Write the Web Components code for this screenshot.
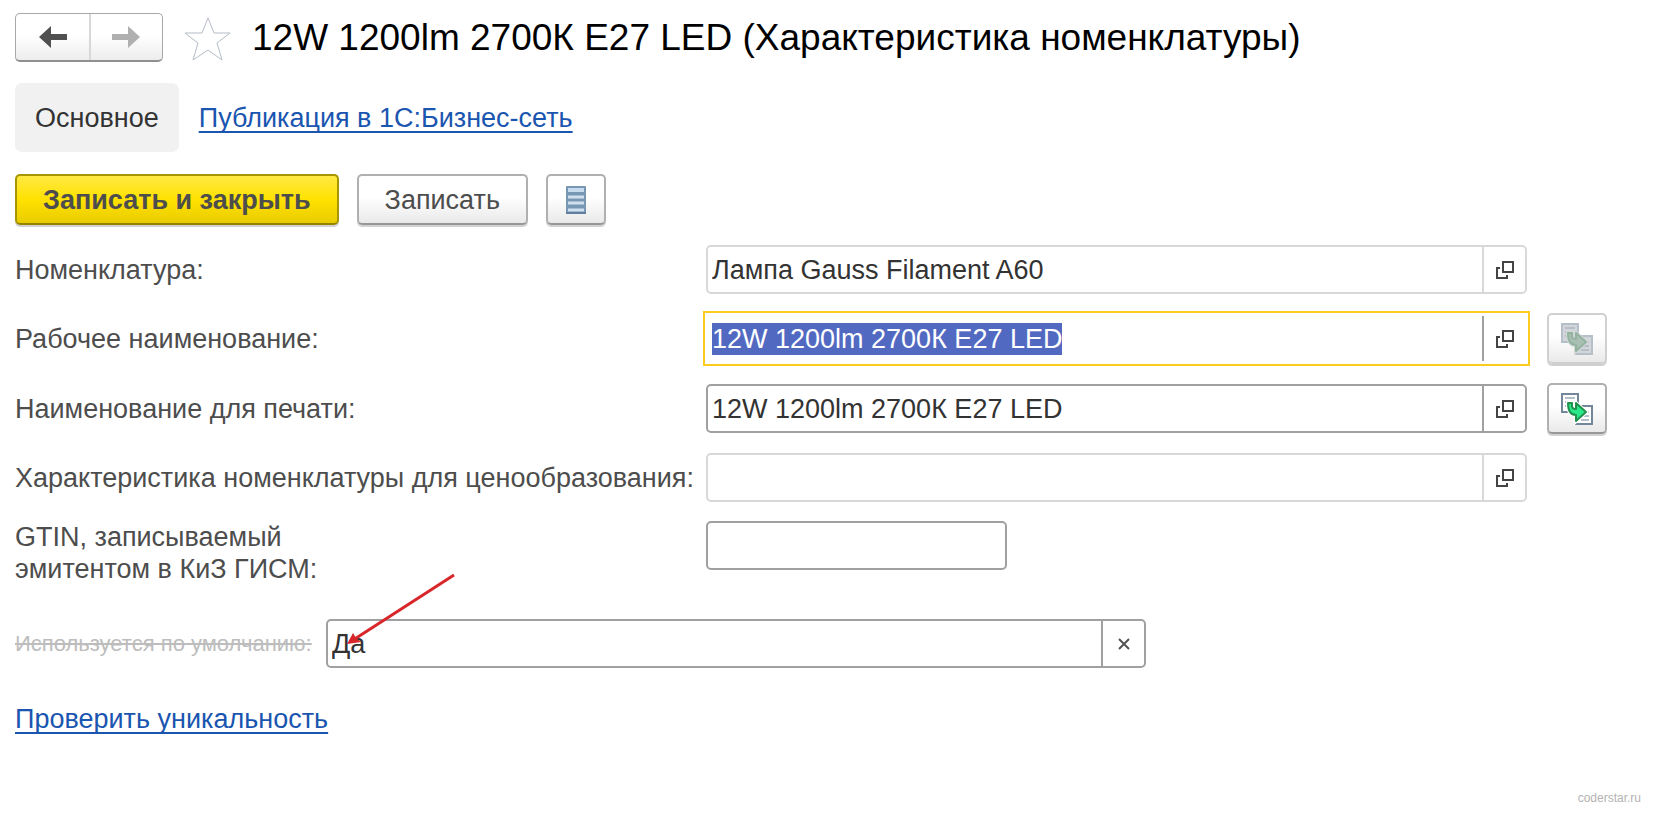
<!DOCTYPE html>
<html lang="ru">
<head>
<meta charset="utf-8">
<title>Характеристика номенклатуры</title>
<style>
    body {
        margin: 0;
        background: #fff;
        color: #4d4d4d;
        font: 27px/32px "Liberation Sans", Arial, sans-serif;
    }
</style>
</head>
<body>
<item-form>
    <form-header slot="header">12W 1200lm 2700К E27 LED (Характеристика номенклатуры)</form-header>

    <form-tab slot="tabs">Основное</form-tab>
    <form-link slot="tabs">Публикация в 1С:Бизнес-сеть</form-link>

    <form-button slot="commands" kind="primary">Записать и закрыть</form-button>
    <form-button slot="commands" kind="text">Записать</form-button>
    <form-button slot="commands" kind="icon" icon="list" label="Список"></form-button>

    <form-field value="Лампа Gauss Filament A60" action="open" muted>Номенклатура:</form-field>
    <form-field value="12W 1200lm 2700К E27 LED" action="open" active>Рабочее наименование:
        <form-button slot="side" kind="icon" icon="copy" label="Заполнить" disabled></form-button>
    </form-field>
    <form-field value="12W 1200lm 2700К E27 LED" action="open">Наименование для печати:
        <form-button slot="side" kind="icon" icon="copy" label="Заполнить"></form-button>
    </form-field>
    <form-field action="open" muted>Характеристика номенклатуры для ценообразования:</form-field>
    <form-field short>GTIN, записываемый<br>эмитентом в КиЗ ГИСМ:</form-field>
    <form-field slot="extra" value="Да" action="clear" unused>Используется по умолчанию:</form-field>

    <form-link slot="extra">Проверить уникальность</form-link>
    <span slot="footer">coderstar.ru</span>
</item-form>

<script>
const icons = {
    back: `<svg width="28" height="22" viewBox="0 0 28 22"><path fill="#505050" d="M0 11 12 0V8H28V14H12V22Z"/></svg>`,
    forward: `<svg width="28" height="22" viewBox="0 0 28 22"><path fill="#b0b0b0" d="M28 11 16 0V8H0V14H16V22Z"/></svg>`,
    star: `<svg width="48" height="46" viewBox="0 0 48 46"><path fill="#fff" stroke="#b5bdc6" d="M24 3 30 18H46L33 28 38 45 24 35 9 45 14 28 1 18H18Z"/></svg>`,
    open: `<svg width="18" height="18" viewBox="0 0 18 18" fill="none" stroke="#444" stroke-width="2"><path d="M7 1H17V11H7ZM4 7H1V17H11V14"/></svg>`,
    clear: `<svg width="12" height="12" viewBox="0 0 12 12" fill="none" stroke="#555" stroke-width="2"><path d="M1 1 11 11M11 1 1 11"/></svg>`,
    list: `<svg width="20" height="28" viewBox="0 0 20 28">
        <rect width="20" height="28" rx="1" fill="#7897b2"/>
        <path stroke="#c6dbed" stroke-width="4" d="M2 4H18"/>
        <path stroke="#cfe0ef" stroke-width="3" d="M2 11H18M2 17H18M2 24H18"/>
        <path stroke="#5f7f9b" stroke-width="2" d="M0 27H20"/>
    </svg>`,
    copy: `<svg width="32" height="32" viewBox="0 0 32 32">
        <path class="page" fill="#fff" stroke="#74869a" stroke-width="2" d="M1 1H17V19H1ZM15 13H31V31H15Z"/>
        <path class="lines" stroke="#b4bfca" stroke-width="2" d="M4 5H14M4 9H14M4 13H12M20 19H28M20 23H28M20 27H28"/>
        <path class="halo" fill="#fff" stroke="#fff" stroke-width="4" d="M7 10H11V13Q11 16 15 16V10L25 19 15 28V22C9 22 7 17 7 10Z"/>
        <path class="arrow" fill="#2be88b" stroke="#23914d" stroke-width="2" stroke-linejoin="round" d="M7 10H11V13Q11 16 15 16V10L25 19 15 28V22C9 22 7 17 7 10Z"/>
    </svg>`
}

class ItemForm extends HTMLElement {
    constructor() {
        super()
        this.attachShadow({ mode: 'open' })
        this.shadowRoot.innerHTML = `
        <style>
            :host {
                display: flex;
                flex-direction: column;
                box-sizing: border-box;
                min-height: 100vh;
                padding: 13px 48px 9px 15px;
            }
            nav {
                display: flex;
                align-items: center;
                gap: 20px;
                margin: 21px 0 22px;
            }
            .commands {
                display: flex;
                gap: 18px;
                margin-bottom: 20px;
            }
            .fields {
                display: flex;
                flex-direction: column;
                gap: 19px;
            }
            .extra {
                display: flex;
                flex-direction: column;
                align-items: flex-start;
                gap: 35px;
                margin-top: 34px;
            }
            footer {
                margin: auto -34px 0 0;
                text-align: right;
                font-size: 12px;
                line-height: 16px;
                color: #b3b3b3;
            }
        </style>
        <slot name="header"></slot>
        <nav><slot name="tabs"></slot></nav>
        <div class="commands"><slot name="commands"></slot></div>
        <div class="fields"><slot></slot></div>
        <div class="extra"><slot name="extra"></slot></div>
        <footer><slot name="footer"></slot></footer>`
    }
}

class FormHeader extends HTMLElement {
    constructor() {
        super()
        this.attachShadow({ mode: 'open' })
        this.shadowRoot.innerHTML = `
        <style>
            :host {
                display: flex;
                align-items: center;
            }
            .history {
                display: grid;
                grid-template-columns: 1fr 1fr;
                box-sizing: border-box;
                width: 148px;
                height: 49px;
                border: 1px solid #a8a8a8;
                border-bottom: 2px solid #909090;
                border-radius: 5px;
                background: linear-gradient(#fff 45%, #ededed);
            }
            button {
                display: flex;
                align-items: center;
                justify-content: center;
                padding: 0;
                border: 0;
                background: none;
            }
            .history button:first-child {
                border-right: 2px solid #d8d8d8;
                margin-right: -2px;
            }
            .star {
                flex: none;
                width: 48px;
                margin: 0 20px 0 21px;
            }
            h1 {
                margin: 0;
                color: #000;
                font-size: 37px;
                font-weight: 400;
                line-height: 49px;
            }
            svg { display: block; }
        </style>
        <div class="history">
            <button aria-label="Назад">${icons.back}</button>
            <button aria-label="Вперед" disabled>${icons.forward}</button>
        </div>
        <button class="star" aria-label="В избранное">${icons.star}</button>
        <h1><slot></slot></h1>`
    }
}

class FormTab extends HTMLElement {
    constructor() {
        super()
        this.attachShadow({ mode: 'open' })
        this.shadowRoot.innerHTML = `
        <style>
            :host { display: block; }
            button {
                height: 69px;
                padding: 0 20px;
                border: 0;
                border-radius: 7px;
                background: #f1f1f1;
                color: #333;
                font: inherit;
            }
        </style>
        <button aria-current="page"><slot></slot></button>`
    }
}

class FormLink extends HTMLElement {
    constructor() {
        super()
        this.attachShadow({ mode: 'open' })
        this.shadowRoot.innerHTML = `
        <style>
            :host { display: block; }
            a {
                color: #1a55b0;
                text-decoration: underline 2px;
                text-decoration-skip-ink: none;
                text-underline-offset: 4px;
            }
        </style>
        <a href="#"><slot></slot></a>`
    }
}

class FormButton extends HTMLElement {
    constructor() {
        super()
        this.attachShadow({ mode: 'open' })
    }

    render() {
        const kind = this.getAttribute('kind') ?? 'text'
        const icon = icons[this.getAttribute('icon')] ?? ''
        const label = this.getAttribute('label')

        this.shadowRoot.innerHTML = `
        <style>
            :host { display: block; }
            button {
                display: flex;
                align-items: center;
                justify-content: center;
                box-sizing: border-box;
                height: 51px;
                padding: 0 26px;
                border: 2px solid #b0b0b0;
                border-bottom-color: #979797;
                border-radius: 5px;
                background: linear-gradient(#fff 45%, #e9e9e9);
                box-shadow: 0 2px #d2d2d2;
                color: #4d4d4d;
                font: inherit;
                white-space: nowrap;
            }
            .primary {
                border-color: #a89600;
                border-bottom-color: #958300;
                background: linear-gradient(#ffe943, #ffe100 50%, #e9cc00);
                font-weight: 700;
            }
            .icon {
                width: 60px;
                padding: 0;
            }
            button:disabled {
                border-color: #d0d0d0;
                box-shadow: 0 2px #d0d0d0;
            }
            /* неактивная картинка */
            button:disabled .page { fill: #d2d6d8; stroke: #b4bfca; }
            button:disabled .lines { stroke: #b4bfca; }
            button:disabled .halo { fill: #d2d6d8; stroke: #d2d6d8; }
            button:disabled .arrow { fill: #a9bfb2; stroke: #92b3a0; }
        </style>
        <button class="${kind}" ${label ? `aria-label="${label}"` : ''} ${this.hasAttribute('disabled') ? 'disabled' : ''}>${icon}<slot></slot></button>`
    }

    connectedCallback() {
        this.render()
    }
}

class FormField extends HTMLElement {
    constructor() {
        super()
        this.attachShadow({ mode: 'open' })
    }

    render() {
        const value = this.getAttribute('value') ?? ''
        const action = this.getAttribute('action')
        const title = action === 'clear' ? 'Очистить' : 'Открыть'

        this.shadowRoot.innerHTML = `
        <style>
            :host {
                --line: #a0a0a0;
                position: relative;
                display: grid;
                grid-template-columns: 691px 1fr 60px;
                align-items: center;
            }
            :host([muted]) { --line: #d8d8d8; }
            :host([short]) { align-items: start; }
            :host([unused]) {
                grid-template-columns: 311px minmax(0, 820px);
                width: 100%;
            }
            .box {
                display: flex;
                box-sizing: border-box;
                height: 49px;
                margin-right: 20px;
                border: 2px solid var(--line);
                border-radius: 5px;
                background: #fff;
            }
            :host([short]) .box { width: 301px; }
            :host([unused]) .box { margin-right: 0; }
            :host([active]) .box {
                padding: 3px;
                height: 55px;
                margin: -2px 17px -2px -3px;
                border-color: #fbcb1e;
                border-radius: 0;
            }
            input {
                flex: 1;
                min-width: 0;
                padding: 0 4px;
                border: 0;
                outline: 0;
                background: none;
                color: #333;
                font: inherit;
            }
            input::selection {
                background: #5269c2;
                color: #fff;
            }
            .box button {
                display: flex;
                align-items: center;
                justify-content: center;
                width: 43px;
                padding: 0;
                border: 0;
                border-left: 2px solid var(--line);
                background: none;
            }
            :host([unused]) label {
                color: #bdbdbd;
                font-size: 22px;
                text-decoration: line-through;
            }
            .pointer {
                position: absolute;
                left: 331px;
                top: -46px;
                pointer-events: none;
            }
        </style>
        <label for="entry"><slot></slot></label>
        <div class="box">
            <input id="entry" type="text" value="${value}" autocomplete="off" spellcheck="false">
            ${action ? `<button aria-label="${title}">${icons[action]}</button>` : ''}
        </div>
        <slot name="side"></slot>
        ${this.hasAttribute('unused') ? `
        <svg class="pointer" width="110" height="74" viewBox="0 0 110 74" fill="none" stroke="#d8262a" stroke-width="3">
            <path d="M108 2 4 69"/>
            <path fill="#d8262a" stroke="none" d="M1 71 7 60 10 65 15 69Z"/>
        </svg>` : ''}`
    }

    connectedCallback() {
        this.render()
        if (this.hasAttribute('active')) {
            const input = this.shadowRoot.querySelector('input')
            input.focus()
            input.select()
        }
    }
}

customElements.define('form-header', FormHeader)
customElements.define('form-tab', FormTab)
customElements.define('form-link', FormLink)
customElements.define('form-button', FormButton)
customElements.define('item-form', ItemForm)
customElements.define('form-field', FormField)
</script>
</body>
</html>
